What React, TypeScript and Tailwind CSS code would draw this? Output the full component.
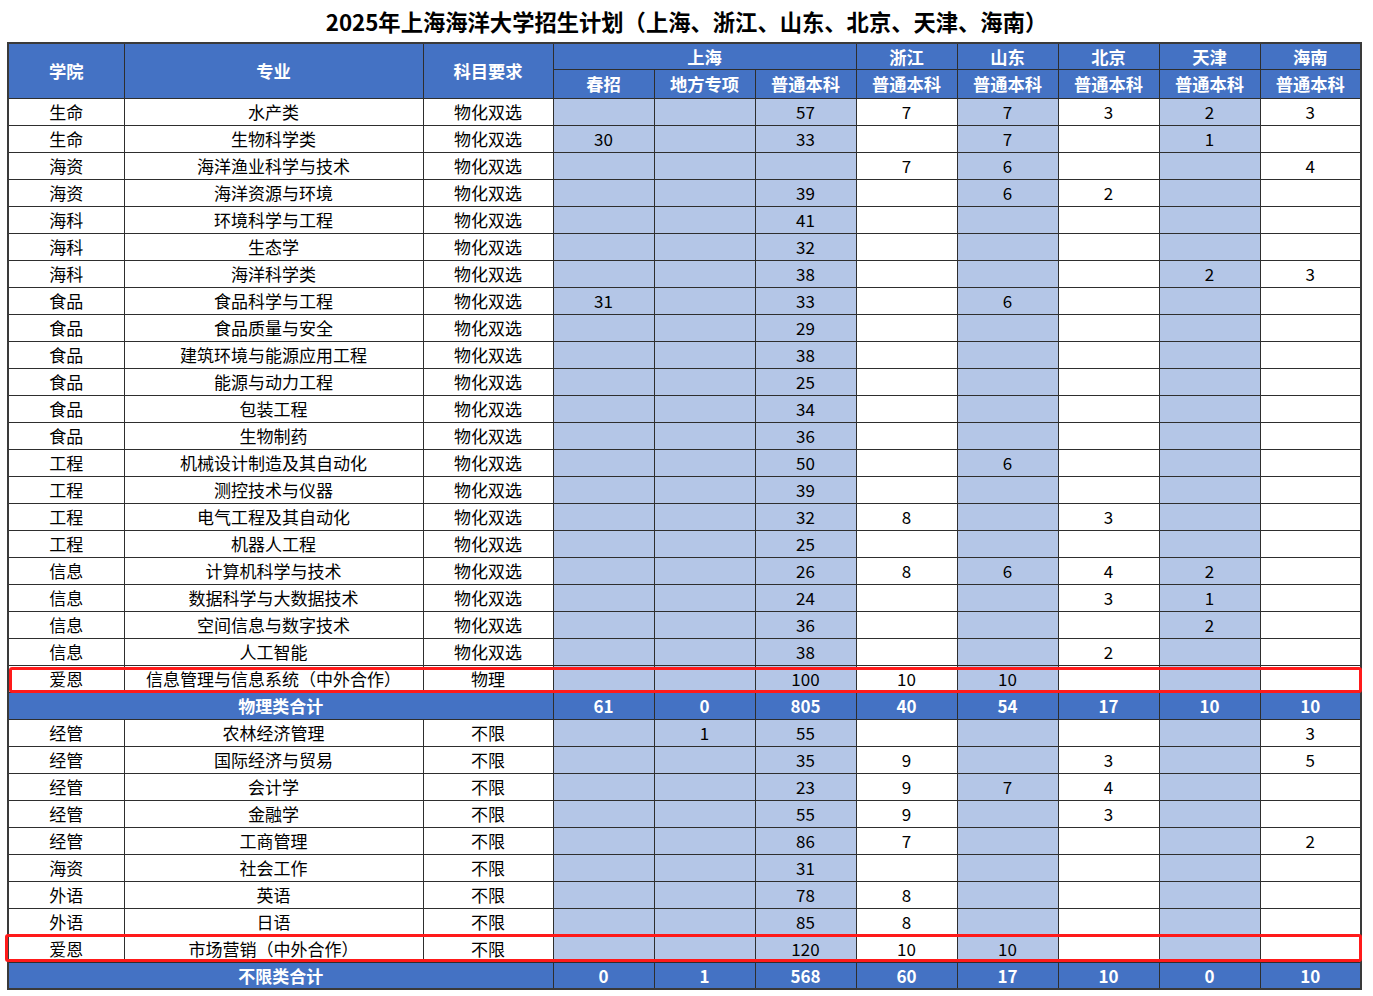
import React from "react";

type Row = [string, string, string, ...(number | null)[]];

const _ = null;

const PHYSICS: Row[] = [
  ["生命", "水产类", "物化双选", _, _, 57, 7, 7, 3, 2, 3],
  ["生命", "生物科学类", "物化双选", 30, _, 33, _, 7, _, 1, _],
  ["海资", "海洋渔业科学与技术", "物化双选", _, _, _, 7, 6, _, _, 4],
  ["海资", "海洋资源与环境", "物化双选", _, _, 39, _, 6, 2, _, _],
  ["海科", "环境科学与工程", "物化双选", _, _, 41, _, _, _, _, _],
  ["海科", "生态学", "物化双选", _, _, 32, _, _, _, _, _],
  ["海科", "海洋科学类", "物化双选", _, _, 38, _, _, _, 2, 3],
  ["食品", "食品科学与工程", "物化双选", 31, _, 33, _, 6, _, _, _],
  ["食品", "食品质量与安全", "物化双选", _, _, 29, _, _, _, _, _],
  ["食品", "建筑环境与能源应用工程", "物化双选", _, _, 38, _, _, _, _, _],
  ["食品", "能源与动力工程", "物化双选", _, _, 25, _, _, _, _, _],
  ["食品", "包装工程", "物化双选", _, _, 34, _, _, _, _, _],
  ["食品", "生物制药", "物化双选", _, _, 36, _, _, _, _, _],
  ["工程", "机械设计制造及其自动化", "物化双选", _, _, 50, _, 6, _, _, _],
  ["工程", "测控技术与仪器", "物化双选", _, _, 39, _, _, _, _, _],
  ["工程", "电气工程及其自动化", "物化双选", _, _, 32, 8, _, 3, _, _],
  ["工程", "机器人工程", "物化双选", _, _, 25, _, _, _, _, _],
  ["信息", "计算机科学与技术", "物化双选", _, _, 26, 8, 6, 4, 2, _],
  ["信息", "数据科学与大数据技术", "物化双选", _, _, 24, _, _, 3, 1, _],
  ["信息", "空间信息与数字技术", "物化双选", _, _, 36, _, _, _, 2, _],
  ["信息", "人工智能", "物化双选", _, _, 38, _, _, 2, _, _],
  ["爱恩", "信息管理与信息系统（中外合作）", "物理", _, _, 100, 10, 10, _, _, _],
];

const OPEN: Row[] = [
  ["经管", "农林经济管理", "不限", _, 1, 55, _, _, _, _, 3],
  ["经管", "国际经济与贸易", "不限", _, _, 35, 9, _, 3, _, 5],
  ["经管", "会计学", "不限", _, _, 23, 9, 7, 4, _, _],
  ["经管", "金融学", "不限", _, _, 55, 9, _, 3, _, _],
  ["经管", "工商管理", "不限", _, _, 86, 7, _, _, _, 2],
  ["海资", "社会工作", "不限", _, _, 31, _, _, _, _, _],
  ["外语", "英语", "不限", _, _, 78, 8, _, _, _, _],
  ["外语", "日语", "不限", _, _, 85, 8, _, _, _, _],
  ["爱恩", "市场营销（中外合作）", "不限", _, _, 120, 10, 10, _, _, _],
];

const PHYSICS_TOTAL = [61, 0, 805, 40, 54, 17, 10, 10];
const OPEN_TOTAL = [0, 1, 568, 60, 17, 10, 0, 10];

// which of the 8 number columns carry the light blue fill
const SHADED = [true, true, true, false, true, false, true, false];

const cell = "border border-[#2e2e2e] text-center p-0";
const th = `${cell} bg-[#4472c4] text-white font-bold text-[17.3px]`;

function DataRow({ row }: { row: Row }) {
  const [college, major, req, ...nums] = row;
  return (
    <tr className="h-[27px]">
      <td className={cell}>{college}</td>
      <td className={cell}>{major}</td>
      <td className={cell}>{req}</td>
      {nums.map((n, i) => (
        <td key={i} className={`${cell} ${SHADED[i] ? "bg-[#b4c6e7]" : "bg-white"}`}>
          {n ?? ""}
        </td>
      ))}
    </tr>
  );
}

function TotalRow({ label, totals }: { label: string; totals: number[] }) {
  return (
    <tr className="h-[27px] bg-[#4472c4] text-white font-bold">
      <td colSpan={3} className={cell}>
        {label}
      </td>
      {totals.map((n, i) => (
        <td key={i} className={cell}>
          {n}
        </td>
      ))}
    </tr>
  );
}

export default function App() {
  const provinces = ["浙江", "山东", "北京", "天津", "海南"];
  return (
    <div
      className="w-[1373px] h-[996px] bg-white text-black"
      style={{ fontFamily: '"Noto Sans CJK SC", "Noto Sans", sans-serif' }}
    >
      <h1 className="h-[42px] flex items-center justify-center text-[22.3px] font-bold leading-none">
        2025年上海海洋大学招生计划（上海、浙江、山东、北京、天津、海南）
      </h1>
      <div className="relative ml-[7px] w-[1355px]">
        <table className="w-[1355px] table-fixed border-collapse border-2 border-[#3a3a3a] text-[17px] leading-none">
          <colgroup>
            <col className="w-[116px]" />
            <col className="w-[299px]" />
            <col className="w-[130px]" />
            {Array.from({ length: 8 }).map((_, i) => (
              <col key={i} className="w-[101px]" />
            ))}
          </colgroup>
          <thead>
            <tr className="h-[26px]">
              <th rowSpan={2} className={th}>学院</th>
              <th rowSpan={2} className={th}>专业</th>
              <th rowSpan={2} className={th}>科目要求</th>
              <th colSpan={3} className={th}>上海</th>
              {provinces.map((p) => (
                <th key={p} className={th}>{p}</th>
              ))}
            </tr>
            <tr className="h-[29px]">
              <th className={th}>春招</th>
              <th className={th}>地方专项</th>
              {Array.from({ length: 6 }).map((_, i) => (
                <th key={i} className={th}>普通本科</th>
              ))}
            </tr>
          </thead>
          <tbody>
            {PHYSICS.map((r, i) => (
              <DataRow key={`p${i}`} row={r} />
            ))}
            <TotalRow label="物理类合计" totals={PHYSICS_TOTAL} />
            {OPEN.map((r, i) => (
              <DataRow key={`o${i}`} row={r} />
            ))}
            <TotalRow label="不限类合计" totals={OPEN_TOTAL} />
          </tbody>
        </table>
        {/* red highlight boxes over the joint-programme rows */}
        <div className="pointer-events-none absolute left-[2px] top-[625px] w-[1353px] h-[26px] rounded-[3px] border-[3px] border-[#ff1a1a]" />
        <div className="pointer-events-none absolute left-[-2px] top-[892px] w-[1357px] h-[28px] rounded-[3px] border-[3px] border-[#ff1a1a]" />
      </div>
    </div>
  );
}
